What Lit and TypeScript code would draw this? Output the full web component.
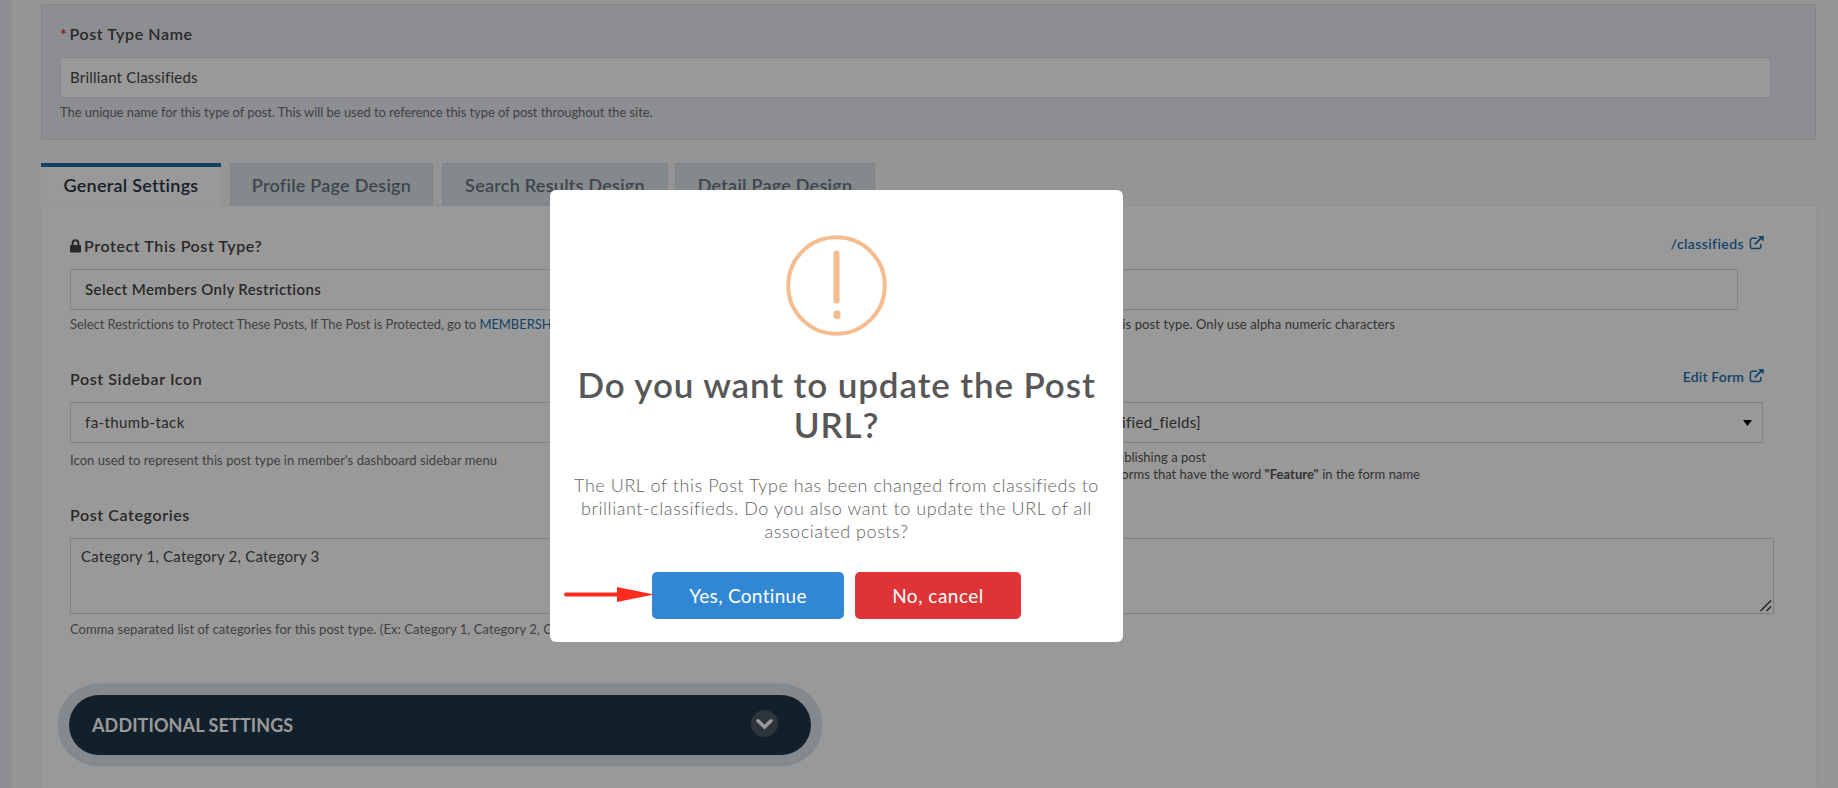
import { html, css, LitElement } from 'lit';
import { customElement } from 'lit/decorators.js';

const externalIcon = html`
  <svg class="external" viewBox="0 0 15 14" width="15" height="14">
    <path d="M8 2.200H3.400a2 2 0 0 0-2 2v6.400a2 2 0 0 0 2 2h6.400a2 2 0 0 0 2-2V8" fill="none" stroke="currentColor" stroke-width="1.500"/>
    <path d="M5.800 8.400L12 2.200" stroke="currentColor" stroke-width="1.900"/>
    <path d="M9 0h5.600v5.600z" fill="currentColor"/>
  </svg>`;

@customElement('confirm-dialog')
export class ConfirmDialog extends LitElement {
  static styles = css`
    :host {
      position: absolute;
      left: 550px;
      top: 190px;
      width: 573px;
      height: 452px;
      box-sizing: border-box;
      padding: 45px 0 0;
      border-radius: 6px;
      background: #fff;
      display: flex;
      flex-direction: column;
      align-items: center;
      text-align: center;
      white-space: nowrap;
    }
    .icon {
      display: block;
      margin-bottom: 28px;
    }
    h2 {
      margin: 0;
      font-size: 35px;
      line-height: 40px;
      font-weight: 600;
      letter-spacing: 0.88px;
      color: #575757;
    }
    p {
      margin: 30px 0 0;
      font-size: 18px;
      line-height: 23px;
      font-weight: 300;
      letter-spacing: 0.56px;
      color: #626262;
    }
    .actions {
      display: flex;
      gap: 11px;
      margin-top: 29px;
    }
    button {
      height: 47px;
      padding: 0;
      border: 0;
      border-radius: 5px;
      font: 400 19px/47px Lato, sans-serif;
      letter-spacing: 0.32px;
      color: #fff;
    }
    .confirm {
      width: 192px;
      background: #3187d3;
    }
    .cancel {
      width: 166px;
      background: #de3436;
      letter-spacing: 0.5px;
    }
    .arrow {
      position: absolute;
      left: 14px;
      top: 396px;
    }
  `;

  render() {
    return html`
      <svg class="icon" width="101" height="101" viewBox="0 0 101 101">
        <circle cx="50.500" cy="50.500" r="48.300" fill="none" stroke="#f5bd8f" stroke-width="4"/>
        <rect x="47.500" y="15.500" width="6" height="53" rx="2.500" fill="#f5bd8f"/>
        <rect x="47.500" y="75.500" width="7" height="8.500" rx="3" fill="#f5bd8f"/>
      </svg>
      <h2>Do you want to update the Post<br>URL?</h2>
      <p>The URL of this Post Type has been changed from classifieds to<br>brilliant-classifieds. Do you also want to update the URL of all<br>associated posts?</p>
      <div class="actions">
        <button class="confirm">Yes, Continue</button>
        <button class="cancel">No, cancel</button>
      </div>
      <svg class="arrow" width="92" height="18" viewBox="0 0 92 18">
        <path d="M2 8.500H54" stroke="#ff2b1f" stroke-width="4" stroke-linecap="round"/>
        <path d="M53 1L90 8.500L53 16z" fill="#ff2b1f"/>
      </svg>
    `;
  }
}

@customElement('app-root')
export class AppRoot extends LitElement {
  static styles = css`
    :host {
      display: block;
      position: relative;
      width: 1838px;
      height: 788px;
      overflow: hidden;
      font-family: Lato, sans-serif;
      color: #484848;
    }
    .page {
      display: flex;
      height: 100%;
      background: #f8f8f8;
      white-space: nowrap;
    }
    .rail {
      width: 12px;
      background: #eceef4;
    }
    .main {
      flex: 1;
      display: flex;
      flex-direction: column;
      padding: 4px 22px 0 29px;
    }
    .name-box {
      height: 136px;
      box-sizing: border-box;
      border: 1px solid #dddfe6;
      background: #ebedf4;
      padding: 19px 0 0 18px;
    }
    .label {
      height: 20px;
      font-size: 16px;
      line-height: 19px;
      font-weight: 600;
      letter-spacing: 0.6px;
      color: #454545;
    }
    .name-box .label {
      letter-spacing: 0.6px;
    }
    .required {
      display: inline-block;
      width: 9.500px;
      letter-spacing: 0;
      font-size: 16px;
      color: #d6303a;
    }
    .input {
      box-sizing: border-box;
      height: 41px;
      border: 1px solid #dadada;
      background: #fff;
      font-size: 15px;
      line-height: 39px;
      letter-spacing: 0.2px;
      color: #444;
    }
    .name-box .input {
      width: 1711px;
      margin-top: 13px;
      padding-left: 9px;
      border-color: #e0e1e6;
    }
    .help {
      font-size: 13px;
      line-height: 18px;
      letter-spacing: -0.06px;
      color: #6c6c6c;
    }
    .name-box .help {
      margin-top: 5px;
    }
    .tabs {
      display: flex;
      gap: 9px;
      height: 43px;
      margin-top: 23px;
    }
    .tab {
      box-sizing: border-box;
      border: 1px solid #d3dce4;
      border-bottom: 0;
      background: #dce4ea;
      text-align: center;
      font-size: 18px;
      line-height: 42px;
      font-weight: 600;
      letter-spacing: 0.25px;
      color: #697481;
    }
    .general {
      width: 180px;
      border: 0;
      border-top: 4px solid #1b6ca6;
      background: #fff;
      line-height: 36px;
      color: #293543;
    }
    .profile {
      width: 203px;
    }
    .results {
      width: 226px;
    }
    .detail {
      width: 200px;
      margin-left: -2px;
    }
    .panel {
      flex: 1;
      padding: 30px 0 0 29px;
      background: #fff;
      box-shadow: 0 0 3px rgba(0, 0, 0, 0.05);
    }
    .row {
      display: flex;
      gap: 35px;
      height: 133px;
    }
    .row + .row {
      height: 136px;
    }
    .left {
      width: 825px;
    }
    .right {
      width: 833px;
    }
    .left .input,
    .right .input {
      margin-top: 13px;
      padding-left: 14px;
    }
    .left .help {
      margin-top: 5px;
    }
    .lock {
      vertical-align: -1px;
      margin-right: 3px;
    }
    .left .strong {
      font-weight: 600;
      letter-spacing: 0.38px;
    }
    .left .icon-input {
      letter-spacing: 0.42px;
    }
    .left .icon-help {
      margin-top: 8px;
      letter-spacing: 0.05px;
    }
    a {
      color: #1b71ad;
      text-decoration: none;
    }
    .top-link {
      display: flex;
      justify-content: flex-end;
      align-items: center;
      gap: 5px;
      height: 14px;
      padding: 0 0 6px;
      margin-right: -1px;
      font-size: 14px;
      font-weight: 600;
      letter-spacing: 0.4px;
    }
    .edit {
      letter-spacing: 0.15px;
    }
    .right .url-input {
      width: 808px;
    }
    .url-help {
      width: 465px;
      margin-top: 5px;
      text-align: right;
      color: #555;
      letter-spacing: 0.1px;
    }
    .select {
      display: flex;
      align-items: center;
    }
    .chosen {
      width: 256px;
      text-align: right;
      letter-spacing: 0.3px;
    }
    .caret {
      margin-left: auto;
      margin-right: 10px;
    }
    .form-help {
      margin-top: 6px;
      line-height: 17px;
      text-align: right;
      color: #555;
      letter-spacing: 0.02px;
    }
    .first {
      width: 276px;
    }
    .second {
      width: 490px;
    }
    .categories {
      height: 178px;
    }
    .textarea {
      position: relative;
      width: 1704px;
      height: 76px;
      margin-top: 13px;
      padding-left: 10px;
      box-sizing: border-box;
      border: 1px solid #d8d8d8;
      font-size: 15px;
      line-height: 35px;
      letter-spacing: 0.22px;
    }
    .grip {
      position: absolute;
      right: 1px;
      bottom: 1px;
    }
    .categories .help {
      margin-top: 6px;
      letter-spacing: 0.06px;
    }
    .additional {
      display: flex;
      align-items: center;
      width: 742px;
      height: 60px;
      box-sizing: border-box;
      margin: 12px 0 0 -1px;
      padding: 0 33px 4px 23px;
      border-radius: 30px;
      background: #1f364a;
      box-shadow: 0 0 0 11.500px #dce4eb;
      color: #fff;
      font-size: 18px;
      font-weight: 700;
      letter-spacing: 0.1px;
    }
    .additional span {
      flex: 1;
      padding-top: 4px;
    }
    .overlay {
      position: absolute;
      inset: 0;
      background: rgba(0, 0, 0, 0.4);
    }
  `;

  render() {
    return html`
      <div class="page">
        <div class="rail"></div>
        <div class="main">
          <div class="name-box">
            <div class="label"><span class="required">*</span>Post Type Name</div>
            <div class="input">Brilliant Classifieds</div>
            <div class="help">The unique name for this type of post. This will be used to reference this type of post throughout the site.</div>
          </div>
          <div class="tabs">
            <div class="tab general">General Settings</div>
            <div class="tab profile">Profile Page Design</div>
            <div class="tab results">Search Results Design</div>
            <div class="tab detail">Detail Page Design</div>
          </div>
          <div class="panel">
            <div class="row">
              <div class="left">
                <div class="label">
                  <svg class="lock" width="11" height="14" viewBox="0 0 11 14">
                    <path d="M2.600 7V4.200a2.900 2.900 0 0 1 5.800 0V7" fill="none" stroke="#444" stroke-width="1.900"/>
                    <rect y="6" width="11" height="7.500" rx="1" fill="#444"/>
                  </svg>Protect This Post Type?
                </div>
                <div class="input strong">Select Members Only Restrictions</div>
                <div class="help">Select Restrictions to Protect These Posts, If The Post is Protected, go to <a>MEMBERSHIP</a></div>
              </div>
              <div class="right">
                <a class="top-link">/classifieds ${externalIcon}</a>
                <div class="input url-input"></div>
                <div class="help url-help">this post type. Only use alpha numeric characters</div>
              </div>
            </div>
            <div class="row">
              <div class="left">
                <div class="label">Post Sidebar Icon</div>
                <div class="input icon-input">fa-thumb-tack</div>
                <div class="help icon-help">Icon used to represent this post type in member's dashboard sidebar menu</div>
              </div>
              <div class="right">
                <a class="top-link edit">Edit Form ${externalIcon}</a>
                <div class="input select">
                  <span class="chosen">[classified_fields]</span>
                  <svg class="caret" width="9" height="6" viewBox="0 0 9 6"><path d="M0 0h9L4.500 6z" fill="#000"/></svg>
                </div>
                <div class="help form-help">
                  <div class="first">publishing a post</div>
                  <div class="second">forms that have the word <b>"Feature"</b> in the form name</div>
                </div>
              </div>
            </div>
            <div class="categories">
              <div class="label">Post Categories</div>
              <div class="textarea">
                Category 1, Category 2, Category 3
                <svg class="grip" width="12" height="12" viewBox="0 0 12 12">
                  <path d="M0.500 11L11 0.500M6.500 11L11 6.500" stroke="#333" stroke-width="1.300"/>
                </svg>
              </div>
              <div class="help">Comma separated list of categories for this post type. (Ex: Category 1, Category 2, Category 3)</div>
            </div>
            <div class="additional">
              <span>ADDITIONAL SETTINGS</span>
              <svg width="27" height="27" viewBox="0 0 27 27">
                <circle cx="13.500" cy="13.500" r="13.500" fill="#4c5864"/>
                <path d="M7 10.800L13.500 17L20 10.800" fill="none" stroke="#fff" stroke-width="3.600" stroke-linecap="round"/>
              </svg>
            </div>
          </div>
        </div>
      </div>
      <div class="overlay"></div>
      <confirm-dialog></confirm-dialog>
    `;
  }
}
